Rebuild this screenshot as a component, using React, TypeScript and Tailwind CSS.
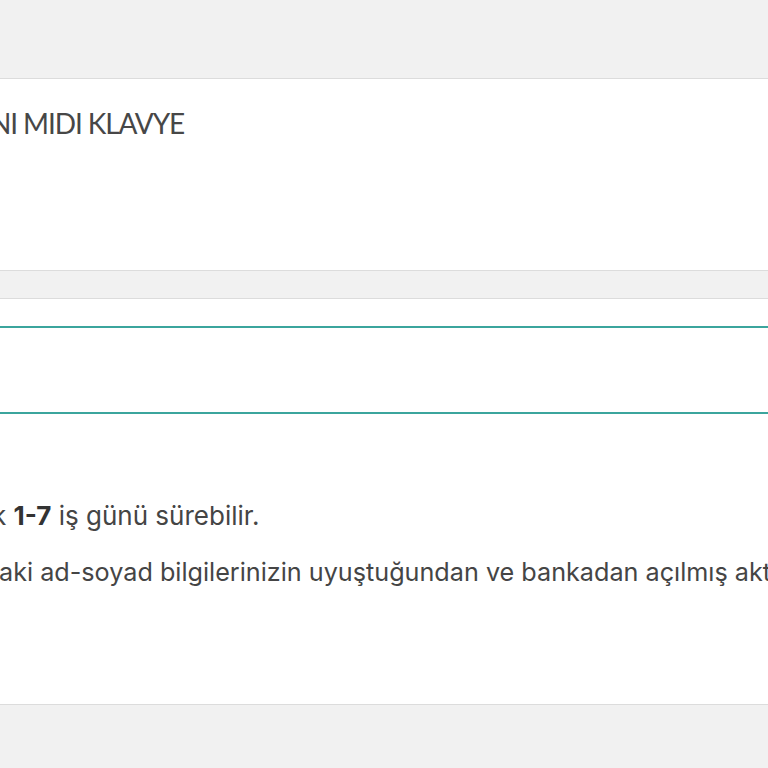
export default function App() {
  return (
    <div className="w-[768px] h-[768px] overflow-hidden bg-[#f1f1f1]">
      <div className="h-[78px]" />
      <div className="h-[193px] bg-white border-y border-[#dcdcdc] overflow-hidden">
        <div
          className="mt-[30px] ml-[-10px] whitespace-nowrap text-[28px] leading-none text-[#474747] tracking-[-1.1px]"
          style={{ fontFamily: "Lato, 'Open Sans', sans-serif" }}
        >
          NI MIDI KLAVYE
        </div>
      </div>
      <div className="h-[27px]" />
      <div
        className="h-[407px] bg-white border-y border-[#dcdcdc] overflow-hidden"
        style={{ fontFamily: "Inter, 'Noto Sans', sans-serif" }}
      >
        <div className="mt-[27px] h-[88px] border-y-2 border-[#3ba59d]" />
        <div className="mt-[89px] whitespace-nowrap text-[26px] leading-none text-[#454545] ml-[-8px]">
          k <span className="font-bold text-[#333]">1-7</span> iş günü sürebilir.
        </div>
        <div className="mt-[31px] whitespace-nowrap text-[25.2px] leading-none text-[#454545] ml-[-1px]">
          aki ad-soyad bilgilerinizin uyuştuğundan ve bankadan açılmış aktif hesabınız olduğundan emin olun.
        </div>
      </div>
    </div>
  );
}
